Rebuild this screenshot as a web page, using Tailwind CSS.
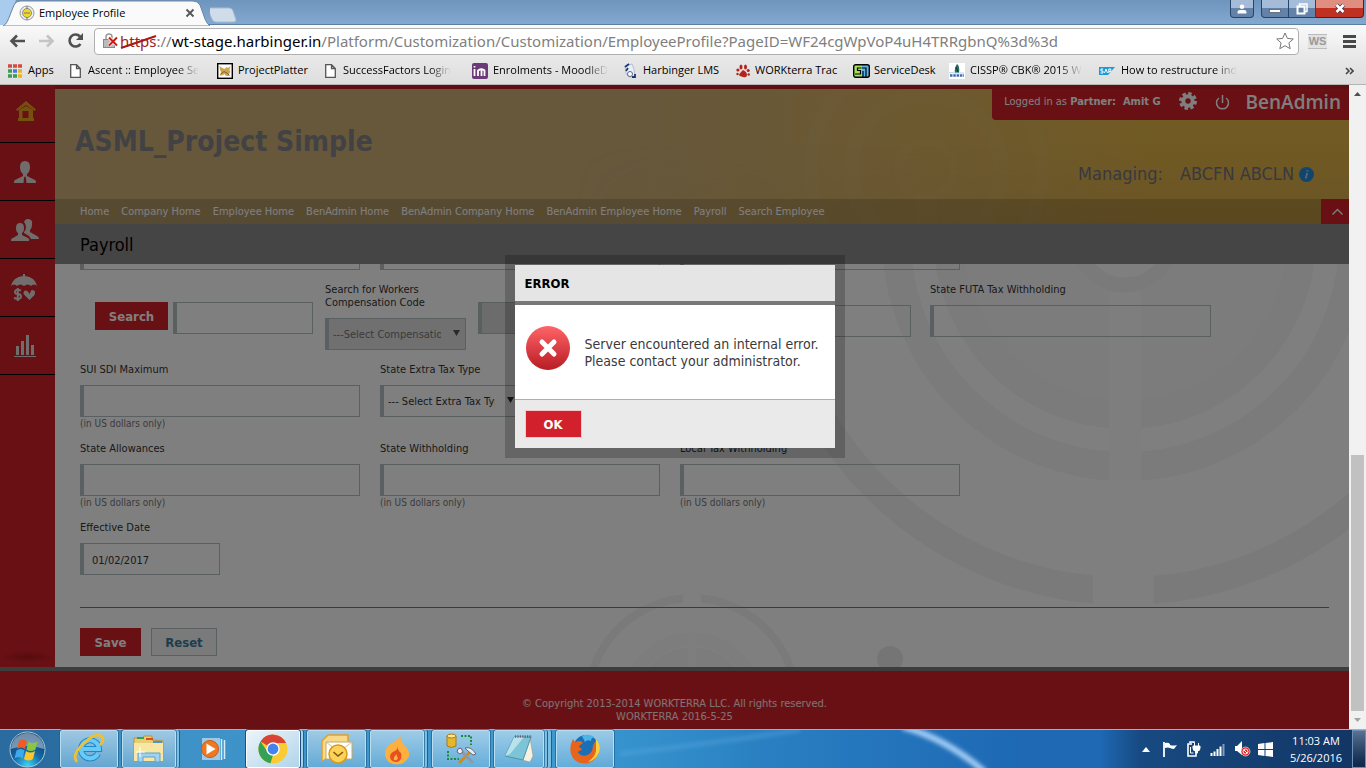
<!DOCTYPE html>
<html lang="en" class="h-full">
  <head>
    <meta charset="UTF-8" />
    <meta name="viewport" content="width=device-width, initial-scale=1.0" />
    <title>Employee Profile</title>
    <!-- tailwind -->
    <script src="https://cdn.jsdelivr.net/npm/@tailwindcss/browser@4"></script>
  </head>

  <body class="flex flex-col h-screen overflow-hidden bg-[#7199c0] font-['Open_Sans',sans-serif] text-[11px] text-black">
    <!-- tab strip -->
    <header class="relative flex justify-between h-[25px] shrink-0 bg-linear-to-b from-[#6e95bd] to-[#84a9d0] border-b border-[#5d7ea3]">
      <div class="flex">
        <div class="relative z-10 flex items-center w-[210px] h-[26px] pl-[19px]">
          <svg class="absolute inset-0" width="210" height="26" viewBox="0 0 210 26">
            <path d="M0 0H16L6 25H0Z" fill="#a9cbee" />
            <path d="M3 26C7 24 8 20 10 15L14 5Q16 1 20 1H193Q198 1 200 5L205 19Q207 24 210 26Z" fill="#fafafa" stroke="#6d86a3" />
          </svg>
          <svg class="relative" width="16" height="16" viewBox="0 0 16 16">
            <circle cx="8" cy="8" r="7" fill="#eee" stroke="#999" />
            <circle cx="8" cy="8" r="4.500" fill="#f2d824" stroke="#8d8d8d" />
            <path d="M5 8h6M8 1v3M8 12v3" stroke="#777" />
          </svg>
          <span class="relative ml-1 text-[11px]">Employee Profile</span>
          <button class="relative ml-auto mr-[15px]" aria-label="Close tab">
            <svg width="10" height="10" viewBox="0 0 10 10"><path d="M1.500 1.500l7 7M8.500 1.500l-7 7" stroke="#555" stroke-width="1.800" /></svg>
          </button>
        </div>
        <button class="h-5 mt-1" aria-label="New tab">
          <svg width="32" height="17" viewBox="0 0 32 17"><path d="M1 1H22Q25 1 26 4L29 13Q29 15 26 15H9Q6 15 5 12L1 3Z" transform="translate(-3 1)" fill="#cfdcea" stroke="#a5bcd6" /></svg>
        </button>
      </div>
      <div class="flex items-start h-[18px] mr-[2px] text-white">
        <button class="flex items-center justify-center w-6 h-[18px] mr-[7px] bg-linear-to-b from-[#a4bcd8] from-50% to-[#6482a8] to-50% border border-t-0 border-[#26456b] rounded-b" aria-label="User">
          <svg width="10" height="10" viewBox="0 0 10 10"><circle cx="5" cy="2.800" r="2.300" fill="#fff" /><path d="M.5 9.500V8Q.5 6 3 6H7Q9.500 6 9.500 8V9.500Z" fill="#fff" /></svg>
        </button>
        <button class="flex items-center justify-center w-7 h-[18px] bg-linear-to-b from-[#a4bcd8] from-50% to-[#6482a8] to-50% border border-t-0 border-[#26456b] rounded-bl" aria-label="Minimize">
          <svg width="12" height="10" viewBox="0 0 12 10"><rect x=".5" y="5.500" width="11" height="3" fill="#fff" stroke="#456" stroke-width=".7" /></svg>
        </button>
        <button class="flex items-center justify-center w-[27px] h-[18px] bg-linear-to-b from-[#a4bcd8] from-50% to-[#6482a8] to-50% border border-t-0 border-l-0 border-[#26456b]" aria-label="Restore">
          <svg width="12" height="12" viewBox="0 0 12 12"><path d="M3.500 3V1H11V8.500H9" fill="none" stroke="#fff" stroke-width="1.500" /><rect x="1.500" y="3.500" width="7" height="7" fill="none" stroke="#fff" stroke-width="2" /></svg>
        </button>
        <button class="flex items-center justify-center w-12 h-[18px] bg-linear-to-b from-[#df8e80] from-50% to-[#bf3020] to-50% border border-t-0 border-l-0 border-[#5b1a1a] rounded-br" aria-label="Close">
          <svg width="12" height="11" viewBox="0 0 12 11"><path d="M2.500 2l7 7M9.500 2l-7 7" stroke="#435" stroke-width="4" /><path d="M2.500 2l7 7M9.500 2l-7 7" stroke="#fff" stroke-width="2.600" /></svg>
        </button>
      </div>
    </header>

    <!-- address bar -->
    <div class="flex items-center h-8 pl-2 pr-[10px] shrink-0 bg-linear-to-b from-[#fafafa] to-[#e8e8e8]">
      <button class="w-5 h-5" aria-label="Back"><svg width="20" height="20" viewBox="0 0 20 20"><path d="M17 10H4M9 4.500L3.500 10 9 15.500" fill="none" stroke="#505050" stroke-width="2.600" /></svg></button>
      <button class="w-5 h-5 ml-[9px]" aria-label="Forward"><svg width="20" height="20" viewBox="0 0 20 20"><path d="M2 10H15M10 4.500L15.500 10 10 15.500" fill="none" stroke="#c4c4c4" stroke-width="2.600" /></svg></button>
      <button class="w-5 h-5 ml-[9px]" aria-label="Reload"><svg width="20" height="20" viewBox="0 0 20 20"><path d="M14.500 13A6 6 0 1 1 14 5.500" fill="none" stroke="#505050" stroke-width="2.600" /><path d="M17 2v7h-7Z" fill="#505050" /></svg></button>
      <div class="flex items-center flex-1 h-[27px] ml-2 pl-2 pr-1 bg-white border border-[#b0b0b0] rounded-sm">
        <svg width="15" height="16" viewBox="0 0 15 16">
          <path d="M3 8V4a3 3 0 0 1 6 0v4" fill="none" stroke="#999" stroke-width="1.500" />
          <rect x=".5" y="6.500" width="11" height="8" fill="#bbb" stroke="#888" />
          <path d="M6 4.500l8 8M14 4.500l-8 8" stroke="#fff" stroke-width="3.500" /><path d="M6 4.500l8 8M14 4.500l-8 8" stroke="#cc1c14" stroke-width="2" />
        </svg>
        <div class="relative flex-1 ml-[2px] font-['Noto_Sans',sans-serif] text-[15px] leading-5 whitespace-nowrap text-[#808080]"><span class="text-[#a02020]">https</span>://<span class="text-black">wt-stage.harbinger.in</span>/Platform/Customization/Customization/EmployeeProfile?PageID=WF24cgWpVoP4uH4TRRgbnQ%3d%3d
          <svg class="absolute top-1 left-0" width="37" height="15" viewBox="0 0 37 15"><path d="M1 13L36 1" stroke="#a81818" stroke-width="2" /></svg>
        </div>
        <button aria-label="Bookmark this page"><svg width="18" height="18" viewBox="0 0 18 18"><path d="M9 1l2.400 5.400 5.900.6-4.400 3.900 1.300 5.800L9 13.700l-5.200 3 1.300-5.800L.7 7l5.900-.6Z" fill="#fff" stroke="#777" /></svg></button>
      </div>
      <button class="w-[19px] h-[15px] ml-[9px] bg-[#e2e2e2] border-y border-[#bbb] font-['Liberation_Sans'] text-[11px] font-bold leading-[13px] text-[#999]">WS</button>
      <button class="ml-4" aria-label="Menu"><svg width="13" height="13" viewBox="0 0 13 13"><path d="M0 1.500H13M0 6.500H13M0 11.500H13" stroke="#484848" stroke-width="3" /></svg></button>
    </div>

    <!-- bookmarks bar -->
    <nav class="flex items-center h-[28px] pl-2 pr-3 shrink-0 bg-linear-to-b from-[#e8e8e8] to-[#dedede] whitespace-nowrap border-b border-[#b5b5b5]">
      <a href="#" class="flex items-center w-[62px]">
        <svg width="14" height="14" viewBox="0 0 14 14"><path d="M0 2H4M5 2H9M10 2H14" stroke="#d44b3f" stroke-width="3.500" /><path d="M0 7H4" stroke="#3b9c5a" stroke-width="3.500" /><path d="M5 7H9" stroke="#3f7de0" stroke-width="3.500" /><path d="M10 7H14" stroke="#eeb21f" stroke-width="3.500" /><path d="M0 12H4M5 12H9" stroke="#3b9c5a" stroke-width="3.500" /><path d="M10 12H14" stroke="#eeb21f" stroke-width="3.500" /><path d="M4.500 0V14M9.500 0V14" stroke="#e4e4e4" /></svg>
        <span class="ml-[6px]">Apps</span>
      </a>
      <a href="#" class="flex items-center w-[147px]">
        <svg width="11" height="14" viewBox="0 0 11 14"><path d="M.7.7H6.500L10.300 4.500V13.300H.7ZM6.500.7V4.500H10.300" fill="#fff" stroke="#555" stroke-width="1.300" /></svg>
        <span class="ml-[7px] [mask-image:linear-gradient(to_right,#000_80%,transparent)]">Ascent :: Employee Se</span>
      </a>
      <a href="#" class="flex items-center w-[108px]">
        <svg width="16" height="16" viewBox="0 0 16 16"><rect x=".7" y=".7" width="14.600" height="14.600" fill="#fff" stroke="#000" stroke-width="1.400" /><path d="M2.500 3l3 2 2 1 2-2 1.500 1 2.500-2-1 4 1 2-1.500 2 1 2H9L7.500 11 5 12.500H2.500L4 9 3 7Z" fill="#cfa552" /><path d="M4 11l3-2.500 3 1.500 2 2" stroke="#705222" fill="none" stroke-width=".8" /></svg>
        <span class="ml-[5px]">ProjectPlatter</span>
      </a>
      <a href="#" class="flex items-center w-[147px]">
        <svg width="11" height="14" viewBox="0 0 11 14"><path d="M.7.7H6.500L10.300 4.500V13.300H.7ZM6.500.7V4.500H10.300" fill="#fff" stroke="#555" stroke-width="1.300" /></svg>
        <span class="ml-[7px] [mask-image:linear-gradient(to_right,#000_80%,transparent)]">SuccessFactors Login</span>
      </a>
      <a href="#" class="flex items-center w-[152px]">
        <svg width="16" height="16" viewBox="0 0 16 16"><rect width="16" height="16" rx="2" fill="#6b3a78" /><path d="M2.500 6v7M6 13V7.500q4-2.500 6.500 0V13M9.500 7v6M2.500 3v1.500" fill="none" stroke="#fff" stroke-width="1.800" /></svg>
        <span class="ml-[5px] [mask-image:linear-gradient(to_right,#000_80%,transparent)]">Enrolments - MoodleD</span>
      </a>
      <a href="#" class="flex items-center w-[112px]">
        <svg width="12" height="16" viewBox="0 0 12 16"><path d="M1 3L8 1 10 6 11 14H5L2 11Z" fill="#e9eef6" stroke="#b5bed4" /><path d="M1 4L5 1M2 8L4 5M8 14h3v-3" stroke="#1e3576" stroke-width="1.800" fill="none" /><circle cx="6" cy="11" r="2.500" fill="#fff" stroke="#5a6a7a" /></svg>
        <span class="ml-[7px]">Harbinger LMS</span>
      </a>
      <a href="#" class="flex items-center w-[117px]">
        <svg width="14" height="14" viewBox="0 0 14 14" fill="#b5241c"><path d="M7 6q4 2 4 5t-4 2-4-2 4-5Z" /><ellipse cx="5" cy="3" rx="1.500" ry="2.500" /><ellipse cx="9.500" cy="3" rx="1.500" ry="2.500" /><ellipse cx="1.900" cy="6" rx="1.600" ry="1.500" /><ellipse cx="12.200" cy="6.500" rx="1.500" ry="1.500" /><circle cx="1.500" cy="10" r="1.200" /><circle cx="12.700" cy="10.500" r="1.200" /></svg>
        <span class="ml-[5px]">WORKterra Trac</span>
      </a>
      <a href="#" class="flex items-center w-24">
        <svg width="17" height="14" viewBox="0 0 17 14"><path d="M1 1H9V13H1Z" fill="#a4e05c" /><path d="M9 1H16V13H9Z" fill="#5ab4e8" /><path d="M8 4H4.500V6.500H7.500V10H2" fill="none" stroke="#000" stroke-width="1.200" /><path d="M8.500 4H13V13M10 13V7" fill="none" stroke="#000" stroke-width="1.200" /><rect x=".7" y=".7" width="15.600" height="12.600" rx="2" fill="none" stroke="#000" stroke-width="1.400" /></svg>
        <span class="ml-1">ServiceDesk</span>
      </a>
      <a href="#" class="flex items-center w-[150px]">
        <svg width="16" height="16" viewBox="0 0 16 16"><rect width="16" height="16" fill="#fff" /><path d="M8 1q3 2 2 9H6Q5 5 8 1" fill="#26705f" /><path d="M7 4l2 5" stroke="#223" /><path d="M0 10q3-1 5 0h10" stroke="#b8d4ec" fill="none" /><path d="M1 12.500h14" stroke="#3f6cb0" stroke-width="2.500" stroke-dasharray="2.500 .8" fill="none" /></svg>
        <span class="ml-[5px] [mask-image:linear-gradient(to_right,#000_80%,transparent)]">CISSP® CBK® 2015 W</span>
      </a>
      <a href="#" class="flex items-center">
        <svg width="16" height="8" viewBox="0 0 16 8"><path d="M0 0H16L9 8H0Z" fill="#1a9bd8" /><path d="M4.200 2H2V4H4V6H1.500M5.500 6L7 2 8.500 6M9.800 6V2H11.800V4.500H9.800" stroke="#fff" fill="none" /></svg>
        <span class="ml-[6px] [mask-image:linear-gradient(to_right,#000_80%,transparent)]">How to restructure ind</span>
      </a>
      <button class="ml-auto" aria-label="More bookmarks"><svg width="9" height="8" viewBox="0 0 9 8"><path d="M1 1l3 3-3 3M5 1l3 3-3 3" fill="none" stroke="#444" stroke-width="1.600" /></svg></button>
    </nav>

    <!-- page -->
    <div class="flex flex-1 min-h-0 font-['DejaVu_Sans_Condensed','DejaVu_Sans',sans-serif]">
      <div class="relative flex flex-col flex-1 min-w-0 overflow-hidden bg-white">
        <div class="flex flex-1 min-h-0">
          <aside class="flex flex-col w-[55px] shrink-0 bg-[#d22028]">
            <a href="#" class="flex items-center justify-center h-[58px] pr-1 pb-1 border-b border-black" aria-label="Home">
              <svg width="20" height="21" viewBox="0 0 20 21"><path d="M10 0L20 8.500 18.500 10 10 4 1.500 10 0 8.500Z" fill="#e8a21e" /><path d="M3 9L10 5 17 9V17H18V20H2V17H3ZM6.500 10V17H12.500V10Z" fill="#e8a21e" fill-rule="evenodd" /></svg>
            </a>
            <a href="#" class="flex items-center justify-center h-[58px] pr-[6px] border-b border-black" aria-label="Employee">
              <svg width="22" height="22" viewBox="0 0 22 22" fill="#e4dada"><path d="M6 6q0-6 5-6t5 6q0 5-3 7v2l8 4q1 0 1 3H12.500L12 17 11 15 10 17 9.500 22H0q0-3 1-3l8-4V13Q6 11 6 6Z" /></svg>
            </a>
            <a href="#" class="flex items-center justify-center h-[58px] pr-[6px] border-b border-black" aria-label="Group">
              <svg width="28" height="22" viewBox="0 0 28 22" fill="#e4dada"><path d="M13 3q1-3 4-3 5 0 4 6 0 3-2 5v2l7 4q2 1 2 3H20L18 17l-5-3V13q2-2 2-5 0-3-2-5Z" /><path d="M5 9q0-5 4-5t4 5q0 4-2 5v2l6 3q2 1 1 3H0q0-3 2-3l5-3V14Q5 13 5 9Z" /></svg>
            </a>
            <a href="#" class="flex items-center justify-center h-[58px] pr-2 border-b border-black" aria-label="Benefits">
              <svg width="26" height="28" viewBox="0 0 26 28" fill="#e4dada"><path d="M12 0h2v2q10 1 12 10-3-3-6 0-3-3-7 0-4-3-7 0-3-3-6 0Q2 3 12 2Z" /><path d="M18.500 26l-6-6q0-5 4-3l2 3 2-4q5 0 3 5Z" /><path d="M10 16.500q-6-2-6 1.500 0 2 3 2t3 3q0 3-7 1M6.800 14v13" fill="none" stroke="#e4dada" stroke-width="2" /></svg>
            </a>
            <a href="#" class="flex items-center justify-center h-[58px] pr-[6px] border-b border-black" aria-label="Reports">
              <svg width="22" height="22" viewBox="0 0 22 22"><path d="M0 21.500H22" stroke="#e4dada" /><path d="M3.500 20V11M8.500 20V6M13.500 20V0M18.500 20V10" stroke="#e4dada" stroke-width="3" /></svg>
            </a>
            <div class="h-3 mt-auto mb-1 bg-radial from-[#ac1820] to-[#d22028] to-70%"></div>
          </aside>

          <main class="relative flex flex-col flex-1 min-w-0 border-t-4 border-[#c01c24]">
            <section class="relative shrink-0 bg-linear-to-r from-[#ceb07a] via-[#ceb078] via-45% to-[#e2b446] to-85%">
              <svg class="absolute top-0 right-0" width="560" height="135" viewBox="789 89 560 135" fill="none">
                <g stroke="#fff" stroke-opacity=".03">
                  <circle cx="926" cy="170" r="28" stroke-width="9" />
                  <circle cx="926" cy="170" r="75" stroke-width="16" />
                  <circle cx="926" cy="170" r="116" stroke-width="14" />
                  <path d="M926 196V224" stroke-width="22" />
                </g>
              </svg>
              <div class="absolute inset-0 bg-linear-to-b from-transparent from-40% to-[#b08c60]/25 [mask-image:linear-gradient(to_right,transparent_40%,#000_80%)]"></div>
              <div class="relative flex justify-between h-[110px]">
                <h1 class="pt-9 pl-[20px] text-[28px] leading-[34px] font-bold text-[#848488]">ASML_Project Simple</h1>
                <div class="flex flex-col items-end">
                  <div class="flex items-center h-[31px] pl-3 pr-2 bg-[#d22028] rounded-bl text-white text-[11px]">
                    <p class="pb-[4px]">Logged in as <b>Partner: &nbsp;Amit G</b></p>
                    <button class="mb-[7px] ml-[18px]" aria-label="Settings"><svg width="18" height="18" viewBox="0 0 18 18"><circle cx="9" cy="9" r="4.700" fill="none" stroke="#fff" stroke-width="4" /><circle cx="9" cy="9" r="7.500" fill="none" stroke="#fff" stroke-width="3" stroke-dasharray="3.400 2.490" /></svg></button>
                    <button class="mb-[5px] ml-[18px]" aria-label="Log out"><svg width="15" height="16" viewBox="0 0 15 16"><path d="M4 4a6 6 0 1 0 7 0M7.500 1v8" fill="none" stroke="#fff" stroke-width="1.500" /></svg></button>
                    <span class="pb-[6px] ml-[16px] font-['Open_Sans'] text-[19px] leading-6 font-semibold">BenAdmin</span>
                  </div>
                  <p class="flex items-center pr-[35px] mt-[42px] text-[18px] leading-6 text-[#727280]">Managing:<span class="ml-[17px]">ABCFN ABCLN</span>
                    <svg class="ml-[5px]" width="15" height="15" viewBox="0 0 15 15"><circle cx="7.500" cy="7.500" r="7.500" fill="#208cdc" /><path d="M8.200 6L6.800 11.500M8.600 3.200L8.400 4.500" stroke="#bcd" stroke-width="1.800" /></svg>
                  </p>
                </div>
              </div>
              <nav class="relative flex items-center h-[25px] pl-[25px] bg-black/15 text-[11px] text-white">
                <ul class="flex flex-1 items-center gap-x-[3px] pt-[2px]">
                  <li><a href="#">Home</a></li>
                  <li class="flex items-center gap-[3px]"><svg width="6" height="5" viewBox="0 0 6 5"><path d="M.5.500l2 2-2 2M3.500.500l2 2-2 2" fill="none" stroke="#c8940c" /></svg><a href="#">Company Home</a></li>
                  <li class="flex items-center gap-[3px]"><svg width="6" height="5" viewBox="0 0 6 5"><path d="M.5.500l2 2-2 2M3.500.500l2 2-2 2" fill="none" stroke="#c8940c" /></svg><a href="#">Employee Home</a></li>
                  <li class="flex items-center gap-[3px]"><svg width="6" height="5" viewBox="0 0 6 5"><path d="M.5.500l2 2-2 2M3.500.500l2 2-2 2" fill="none" stroke="#c8940c" /></svg><a href="#">BenAdmin Home</a></li>
                  <li class="flex items-center gap-[3px]"><svg width="6" height="5" viewBox="0 0 6 5"><path d="M.5.500l2 2-2 2M3.500.500l2 2-2 2" fill="none" stroke="#c8940c" /></svg><a href="#">BenAdmin Company Home</a></li>
                  <li class="flex items-center gap-[3px]"><svg width="6" height="5" viewBox="0 0 6 5"><path d="M.5.500l2 2-2 2M3.500.500l2 2-2 2" fill="none" stroke="#c8940c" /></svg><a href="#">BenAdmin Employee Home</a></li>
                  <li class="flex items-center gap-[3px]"><svg width="6" height="5" viewBox="0 0 6 5"><path d="M.5.500l2 2-2 2M3.500.500l2 2-2 2" fill="none" stroke="#c8940c" /></svg><a href="#">Payroll</a></li>
                  <li class="flex items-center gap-[3px]"><svg width="6" height="5" viewBox="0 0 6 5"><path d="M.5.500l2 2-2 2M3.500.500l2 2-2 2" fill="none" stroke="#c8940c" /></svg><a href="#">Search Employee</a></li>
                </ul>
                <button class="flex items-center justify-center w-7 h-full bg-[#d22028]" aria-label="Collapse"><svg class="ml-1" width="11" height="7" viewBox="0 0 11 7"><path d="M.5 6.500l5-5 5 5" fill="none" stroke="#fff" stroke-width="1.400" /></svg></button>
              </nav>
            </section>
            <h2 class="h-10 pl-[25px] shrink-0 bg-[#8a8a8a] text-[18px] leading-[42px] text-black">Payroll</h2>

            <form class="relative flex-1 min-h-0 overflow-hidden px-[25px] text-[11px] text-[#333]">
              <!-- backdrop rings -->
              <svg class="absolute right-0 bottom-0" width="860" height="403" viewBox="489 264 860 403" fill="none">
                <path d="M1093 603.500A367 367 0 1 1 1154 603.800V575.800A339 339 0 1 0 1093 575.500Z" fill="#f4f4f4" />
                <circle cx="1125" cy="238" r="228.500" stroke="#f7f7f7" stroke-width="29" />
                <circle cx="1125" cy="238" r="191" fill="#f6f6f6" />
                <circle cx="1125" cy="238" r="162" fill="#f9f9f9" />
                <path d="M1125 292V481" stroke="#fcfcfc" stroke-width="32" />
                <circle cx="1125" cy="238" r="47" fill="#fff" stroke="#f5f5f5" stroke-width="15" />
                <path d="M683 702V602.500A100 100 0 0 0 592 702H584A108 108 0 0 1 683 594.500ZM701 702V602.500A100 100 0 0 1 792 702H800A108 108 0 0 0 701 594.500Z" fill="#f4f4f4" />
                <circle cx="692" cy="702" r="63" stroke="#fafafa" stroke-width="13" />
                <circle cx="692" cy="702" r="55" fill="#f8f8f8" />
                <path d="M692 632V702" stroke="#fdfdfd" stroke-width="8" />
                <circle cx="890" cy="659" r="13" fill="#eaeaea" />
              </svg>

              <div class="relative">
                <div class="flex gap-x-5 h-[6px] overflow-hidden items-end">
                  <input type="text" aria-label="Amount 1" class="w-[280px] h-8 border border-l-4 border-[#b5bec4]" />
                  <input type="text" aria-label="Amount 2" class="w-[280px] h-8 border border-l-4 border-[#b5bec4]" />
                  <input type="text" aria-label="Amount 3" class="w-[280px] h-8 border border-l-4 border-[#b5bec4]" />
                </div>

                <div class="flex items-start h-[91px] pt-[11px]">
                  <button type="button" class="w-[73px] h-7 pt-px mt-[21px] ml-[15px] bg-[#d22028] text-[13px] font-bold text-white">Search</button>
                  <input type="text" aria-label="Search code" class="w-[140px] h-8 mt-[21px] ml-[5px] border border-l-4 border-[#b5bec4]" />
                  <div class="w-[141px] pt-[2px] ml-3">
                    <label for="comp" class="block leading-[13px]">Search for Workers Compensation Code</label>
                    <div class="relative mt-[9px]">
                      <select id="comp" disabled class="block w-full h-8 pt-[2px] pl-1 pr-6 overflow-hidden text-[#777] bg-[#e0e0e0] border border-l-4 border-[#b5bec4] appearance-none"><option>---Select Compensation Code---</option></select>
                      <svg class="absolute top-3 right-[6px]" width="7" height="6" viewBox="0 0 7 6"><path d="M0 0H7L3.500 6Z" fill="#555" /></svg>
                    </div>
                  </div>
                  <input type="text" disabled aria-label="Compensation code" class="w-[140px] h-8 mt-[21px] ml-3 bg-[#d8d8d8] border border-l-4 border-[#b5bec4]" />
                  <input type="text" aria-label="Tax rate" class="w-[281px] h-8 mt-6 ml-3 border border-l-4 border-[#b5bec4]" />
                  <div class="w-[281px] ml-[19px]">
                    <label for="futa" class="block h-4 leading-[18px]">State FUTA Tax Withholding</label>
                    <input id="futa" type="text" class="w-full h-8 mt-2 border border-l-4 border-[#b5bec4]" />
                  </div>
                </div>

                <div class="grid grid-cols-[280px_280px_280px] gap-x-5 gap-y-[10px]">
                  <div>
                    <label for="sui" class="block h-4 leading-[18px]">SUI SDI Maximum</label>
                    <input id="sui" type="text" class="block w-full h-8 mt-2 border border-l-4 border-[#b5bec4]" />
                    <p class="h-[13px] text-[10px] leading-[13px] text-[#777]">(in US dollars only)</p>
                  </div>
                  <div class="col-span-2">
                    <label for="extra" class="block h-4 leading-[18px]">State Extra Tax Type</label>
                    <div class="relative w-[140px] mt-2">
                      <select id="extra" class="block w-full h-8 pt-[2px] pl-1 pr-6 overflow-hidden border border-l-4 border-[#b5bec4] appearance-none"><option>--- Select Extra Tax Type ---</option></select>
                      <svg class="absolute top-3 right-[6px]" width="7" height="6" viewBox="0 0 7 6"><path d="M0 0H7L3.500 6Z" fill="#333" /></svg>
                    </div>
                  </div>
                  <div>
                    <label for="allow" class="block h-4 leading-[18px]">State Allowances</label>
                    <input id="allow" type="text" class="block w-full h-8 mt-2 border border-l-4 border-[#b5bec4]" />
                    <p class="h-[13px] text-[10px] leading-[13px] text-[#777]">(in US dollars only)</p>
                  </div>
                  <div>
                    <label for="withhold" class="block h-4 leading-[18px]">State Withholding</label>
                    <input id="withhold" type="text" class="block w-full h-8 mt-2 border border-l-4 border-[#b5bec4]" />
                    <p class="h-[13px] text-[10px] leading-[13px] text-[#777]">(in US dollars only)</p>
                  </div>
                  <div>
                    <label for="local" class="block h-4 leading-[18px]">Local Tax Withholding</label>
                    <input id="local" type="text" class="block w-full h-8 mt-2 border border-l-4 border-[#b5bec4]" />
                    <p class="h-[13px] text-[10px] leading-[13px] text-[#777]">(in US dollars only)</p>
                  </div>
                  <div>
                    <label for="date" class="block h-4 leading-[18px]">Effective Date</label>
                    <input id="date" type="text" value="01/02/2017" class="block w-[140px] h-8 mt-2 pt-[2px] pl-2 border border-l-4 border-[#b5bec4]" />
                  </div>
                </div>

                <hr class="mt-8 mr-[-5px] border-[#777]" />
                <div class="flex gap-[10px] mt-5 text-[13px] font-bold">
                  <button type="submit" class="w-[61px] h-7 pt-px bg-[#d22028] text-white">Save</button>
                  <button type="reset" class="w-[66px] h-7 pt-px bg-[#f4f4f4] border border-[#b5bec4] text-[#3c7c9c]">Reset</button>
                </div>
              </div>
            </form>
          </main>
        </div>
        <footer class="h-[62px] pt-[26px] shrink-0 bg-[#d22028] border-t-4 border-[#7a7a7a] text-[11px] leading-[13px] text-center text-white/90">
          <p>© Copyright 2013-2014 WORKTERRA LLC. All rights reserved.</p>
          <p>WORKTERRA 2016-5-25</p>
        </footer>

        <!-- error dialog -->
        <div class="absolute inset-0 flex items-start justify-center pt-[170px] bg-black/50">
          <div role="dialog" aria-labelledby="dialog-title" class="p-[10px] bg-black/20">
            <div class="w-80 bg-white">
              <h3 id="dialog-title" class="h-10 pl-[10px] bg-[#e5e5e5] border-b-4 border-[#777] text-[13px] leading-[38px] font-bold text-black">ERROR</h3>
              <div class="flex items-start h-[94px] pt-[21px] pl-[11px]">
                <svg width="44" height="44" viewBox="0 0 44 44">
                  <defs><linearGradient id="err" x1="0" y1="0" x2="0" y2="1"><stop offset="0" stop-color="#ff6468" /><stop offset="1" stop-color="#b81c24" /></linearGradient></defs>
                  <circle cx="22" cy="22" r="22" fill="url(#err)" />
                  <path d="M16 16L28 28M28 16L16 28" stroke="#fff" stroke-width="5" stroke-linecap="round" />
                </svg>
                <p class="pt-[10px] ml-[15px] text-[14px] leading-[17px] text-[#3a3a3a]">Server encountered an internal error.<br />Please contact your administrator.</p>
              </div>
              <div class="h-[49px] pt-[11px] pl-[11px] bg-[#eaeaea] border-t border-[#a9bf6d]">
                <button class="block w-[55px] h-[26px] pt-px bg-[#d2202c] outline outline-[#f5c8cc] text-[13px] font-bold text-white">OK</button>
              </div>
            </div>
          </div>
        </div>
      </div>

      <!-- scrollbar -->
      <div class="flex flex-col items-center w-[17px] py-[7px] shrink-0 bg-[#f1f1f1]">
        <svg width="7" height="4" viewBox="0 0 7 4"><path d="M3.500 0L7 4H0Z" fill="#505050" /></svg>
        <div class="w-[13px] h-64 mt-auto mb-[7px] bg-[#c1c1c1]"></div>
        <svg width="7" height="4" viewBox="0 0 7 4"><path d="M0 0H7L3.500 4Z" fill="#a3a3a3" /></svg>
      </div>
    </div>

    <!-- taskbar -->
    <footer class="relative flex h-[39px] shrink-0 border-t border-[#8fb4d6] bg-linear-to-r from-[#2a6ca0] from-3% via-[#3493cc] via-40% to-[#1e68b4] to-75%">
      <svg class="absolute inset-0 w-full h-full" viewBox="0 0 1366 38" preserveAspectRatio="none">
        <defs>
          <filter id="soft"><feGaussianBlur stdDeviation="2" /></filter>
          <linearGradient id="tray"><stop offset="0" stop-color="#174a82" stop-opacity="0" /><stop offset=".15" stop-color="#174a82" /><stop offset="1" stop-color="#123462" /></linearGradient>
          <linearGradient id="glow"><stop offset="0" stop-color="#4aa6dc" stop-opacity=".6" /><stop offset=".6" stop-color="#4aa6dc" stop-opacity=".5" /><stop offset="1" stop-color="#4aa6dc" stop-opacity="0" /></linearGradient>
        </defs>
        <path d="M60 0H760V38H60Z" fill="url(#glow)" />
        <path d="M903 -3Q945 8 985 42" fill="none" stroke="#a4cdf6" stroke-width="6" filter="url(#soft)" />
        <path d="M620 24Q720 12 800 0" fill="none" stroke="#64b0e4" stroke-width="4" opacity=".4" filter="url(#soft)" />
        <path d="M1100 0H1366V38H1100Z" fill="url(#tray)" />
      </svg>
      <button class="relative w-[51px] pl-[9px] mr-[9px]" aria-label="Start">
        <svg width="37" height="37" viewBox="0 0 37 37">
          <defs><radialGradient id="orb" cx=".5" cy=".95" r=".9"><stop offset="0" stop-color="#38d4fa" /><stop offset=".45" stop-color="#146aa6" /><stop offset="1" stop-color="#0e3560" /></radialGradient></defs>
          <circle cx="18.500" cy="18.500" r="17.500" fill="url(#orb)" stroke="#a7cbe0" />
          <path d="M2 18A16.500 16 0 0 1 35 18Q18 12 2 18Z" fill="#d4e2ee" opacity=".5" />
          <path d="M10 10q4-3 8 0l-2 8q-4-3-8 0Z" fill="#ef5a25" /><path d="M19.500 10.500q4 3 9 0l-2 8q-5 3-9 0Z" fill="#8cc63e" /><path d="M7.500 19.500q4-3 8 0l-2 8q-4-3-8 0Z" fill="#3fa9ee" /><path d="M17 20q4 3 9 0l-2 8q-5 3-9 0Z" fill="#fdc72c" />
        </svg>
      </button>
      <button class="relative flex items-center justify-center w-[58px] mr-1 bg-linear-to-b from-white/50 to-white/20 border border-[#b9def2] rounded-xs outline outline-[#1f5f8c]/70" aria-label="Internet Explorer">
        <svg width="32" height="32" viewBox="0 0 32 32"><path d="M25 20.500A9 9 0 1 1 26 16H10" fill="none" stroke="#1e86ce" stroke-width="6" /><path d="M25 20.500A9 9 0 1 1 26 16H10" fill="none" stroke="#69cbf5" stroke-width="4" /><path d="M4 29Q-2 22 11 10T29 4q3 3-2 8" fill="none" stroke="#f3c02c" stroke-width="2.600" /></svg>
      </button>
      <button class="relative flex items-center justify-center w-[54px] mr-[5px] bg-linear-to-b from-white/50 to-white/20 border border-[#b9def2] rounded-xs shadow-[3px_0_0_#7dbfe3,4px_0_0_#1f5f8c] outline outline-[#1f5f8c]/70" aria-label="Explorer">
        <svg width="32" height="30" viewBox="0 0 32 30"><path d="M1 4H10L11 2H19V6L30 7V27H1Z" fill="#e8cd74" stroke="#b8933a" /><path d="M4 3h7v2H4Z" fill="#3aa53a" /><path d="M13 4h7v2h-7Z" fill="#d94b2b" /><path d="M20 7h9v2h-9Z" fill="#4a94d4" /><path d="M1 9H30V27H1Z" fill="#f7e6a4" /><path d="M5 28V19H27V28H22V23H10V28Z" fill="#9fd3ef" stroke="#5ba3cd" /><path d="M7 13v10M3 18h9" stroke="#fff" /></svg>
      </button>
      <button class="relative flex items-center justify-center w-[64px] mr-[1px]" aria-label="Media Player">
        <svg width="28" height="26" viewBox="0 0 28 26"><path d="M3 2H21V24H3Z" fill="#b4d8ee" opacity=".8" /><path d="M22.500 3V24M25.500 4V23" stroke="#d5edfa" stroke-width="1.500" /><circle cx="11" cy="13" r="8.500" fill="#f07820" stroke="#c85a12" /><path d="M7.500 7.500v11l9-5.500Z" fill="#fff" /></svg>
      </button>
      <button class="relative flex items-center justify-center w-[54px] mr-[7px] bg-linear-to-br from-white/90 to-white/60 border border-white rounded-xs shadow-[3px_0_0_#a5d3ec,4px_0_0_#1f5f8c] outline outline-[#1f4f7c]" aria-label="Chrome">
        <svg width="30" height="30" viewBox="0 0 30 30"><circle cx="15" cy="15" r="14.500" fill="#fbcb34" /><path d="M15 15L2.500 7.500A14.500 14.500 0 0 1 28 9H15Z" fill="#d94436" /><path d="M2.500 7.500L10 18.500 15 21 12.500 29.300A14.500 14.500 0 0 1 2.500 7.500Z" fill="#35a152" /><circle cx="15" cy="15" r="6.700" fill="#fff" /><circle cx="15" cy="15" r="5.400" fill="#4383ee" /></svg>
      </button>
      <button class="relative flex items-center justify-center w-[59px] mr-1 bg-linear-to-b from-white/50 to-white/20 border border-[#b9def2] rounded-xs outline outline-[#1f5f8c]/70" aria-label="Outlook">
        <svg width="32" height="30" viewBox="0 0 32 30"><path d="M1 27V7L7 1H27V7" fill="#f8d98a" stroke="#e0a030" stroke-width="1.500" /><path d="M5 8H31V25H5Z" fill="#fff" stroke="#c8a860" /><path d="M5 8L18 18 31 8" fill="none" stroke="#d0c090" /><circle cx="17" cy="20" r="9" fill="#fbd35a" stroke="#d99a1c" stroke-width="1.500" /><path d="M12.500 18L17 22l5-4" fill="none" stroke="#805408" stroke-width="1.500" /></svg>
      </button>
      <button class="relative flex items-center justify-center w-[54px] mr-2 bg-linear-to-b from-white/50 to-white/20 border border-[#b9def2] rounded-xs shadow-[3px_0_0_#7dbfe3,4px_0_0_#1f5f8c] outline outline-[#1f5f8c]/70" aria-label="Flame">
        <svg width="26" height="32" viewBox="0 0 26 32"><path d="M18 0Q14 6 20 12 26 17 25 23 22 31 13 31.500 2 31 1 21 1 14 8 10 16 6 18 0Z" fill="#fbb040" /><path d="M14 13Q13 17 17 20 19 27 13 29 6 29 6 23 7 19 11 18 14 16 14 13Z" fill="#e8501c" /><path d="M13 21Q12 23 14 25 13 28 10 27 9 24 13 21Z" fill="#fcb050" /></svg>
      </button>
      <button class="relative flex items-center justify-center w-[58px] mr-1 bg-linear-to-b from-white/50 to-white/20 border border-[#b9def2] rounded-xs outline outline-[#1f5f8c]/70" aria-label="Database tools">
        <svg width="32" height="32" viewBox="0 0 32 32"><path d="M2 3V13q4 3 9 0V3Z" fill="#e8b62c" stroke="#a57c14" /><ellipse cx="6.500" cy="3" rx="4.500" ry="2" fill="#fae692" stroke="#a57c14" /><path d="M16 3H26V12M3 18V26H14" fill="none" stroke="#1c8a3c" stroke-width="2" stroke-dasharray="2 1.500" /><path d="M14 30L26 18" stroke="#d08a24" stroke-width="3" /><path d="M28 30L16 18" stroke="#8f9aa4" stroke-width="3" /><path d="M20 15q6-2 11 6l-3 1-5-4Z" fill="#e8edf2" stroke="#667" /><path d="M13 16l3-1 2 4-3 2-3-2Z" fill="#eef" stroke="#667" /></svg>
      </button>
      <button class="relative flex items-center justify-center w-[50px] mr-3 bg-linear-to-b from-white/50 to-white/20 border border-[#b9def2] rounded-xs shadow-[3px_0_0_#7dbfe3,4px_0_0_#1f5f8c,7px_0_0_#7dbfe3,8px_0_0_#1f5f8c] outline outline-[#1f5f8c]/70" aria-label="Notepad">
        <svg width="30" height="30" viewBox="0 0 30 30"><path d="M26 3L29 22 26 28 18 26Z" fill="#f6f1e2" stroke="#998" stroke-width=".6" /><path d="M10 3L27 3 19 26 1 22Z" fill="#7cc4d6" stroke="#4b97ab" /><path d="M10 3L20 3 6 20 1 22Z" fill="#d4f0f6" opacity=".7" /><path d="M11 2.500H28" stroke="#667" stroke-width="2.500" stroke-dasharray="1.200 1.200" /></svg>
      </button>
      <button class="relative flex items-center justify-center w-[58px] bg-linear-to-b from-white/50 to-white/20 border border-[#b9def2] rounded-xs outline outline-[#1f5f8c]/70" aria-label="Firefox">
        <svg width="30" height="30" viewBox="0 0 30 30"><circle cx="16" cy="13.500" r="12.500" fill="#1b6fb5" /><path d="M12 2q6-3 12 1-3 1-3 4-4-2-6 1Z" fill="#4cb5e8" /><path d="M26 6q6 8 1 16-5 8-13 7.500Q4 29 1 20-1 12 3 5l2 3 4-1q3 0 4 2l-4 3q0 2 3 2.500l-1 2q-3 0-3 2 3 4 8 3 7-2 7-10Z" fill="#e8641c" /><path d="M26 5q7 9 1 17-4 5-9 6 7-5 8-11Z" fill="#fcd23c" /></svg>
      </button>

      <div class="relative flex items-center ml-auto font-['Open_Sans'] text-white">
        <svg width="8" height="5" viewBox="0 0 8 5"><path d="M4 0L8 5H0Z" fill="#fff" /></svg>
        <svg class="ml-3" width="16" height="16" viewBox="0 0 16 16"><path d="M2 1V16" stroke="#fff" stroke-width="1.800" /><path d="M3 2q3-1 5 1v4q-2-1-5 0Z" fill="#fff" /><path d="M8 4q3 1 7 0l-3 4q-2 0-4-1Z" fill="#fff" /></svg>
        <svg class="ml-2" width="15" height="16" viewBox="0 0 15 16"><path d="M4 2V1H8V2M10 12V15H2V3H6" fill="none" stroke="#fff" stroke-width="1.600" /><path d="M4.500 6v6h3" fill="none" stroke="#fff" /><path d="M7 5H14V7Q14 10 11.500 10V12H9.500V10Q7 10 7 7ZM8.500 2V5M12.500 2V5" fill="#fff" stroke="#fff" /></svg>
        <svg class="ml-[9px]" width="16" height="14" viewBox="0 0 16 14"><path d="M1.500 14V11M4.500 14V9.500M7.500 14V7M10.500 14V4.500" stroke="#fff" stroke-width="2" /><path d="M13.500 14V2" stroke="#7f9cbd" stroke-width="2" /></svg>
        <svg class="ml-2" width="17" height="16" viewBox="0 0 17 16"><path d="M1 5H3L8 0V14L3 10H1Z" fill="#fff" /><circle cx="11.500" cy="10.500" r="4.500" fill="#e02424" stroke="#fff" stroke-width=".6" /><circle cx="11.500" cy="10.500" r="2.500" fill="none" stroke="#fff" /><path d="M10 9l3 3" stroke="#fff" /></svg>
        <svg class="ml-[7px]" width="15" height="15" viewBox="0 0 15 15"><path d="M0 2L6.500 1V7H0ZM7.500 1L15 0V7H7.500ZM0 8H6.500V14L0 13ZM7.500 8H15V15L7.500 14Z" fill="#fff" /></svg>
        <div class="w-16 ml-[11px] text-[11px] leading-[17px] text-center"><p>11:03 AM</p><p>5/26/2016</p></div>
        <button class="w-[14px] h-full ml-[4px] bg-linear-to-b from-white/30 to-black/20 border border-[#6c8fb8]" aria-label="Show desktop"></button>
      </div>
    </footer>
  </body>
</html>
